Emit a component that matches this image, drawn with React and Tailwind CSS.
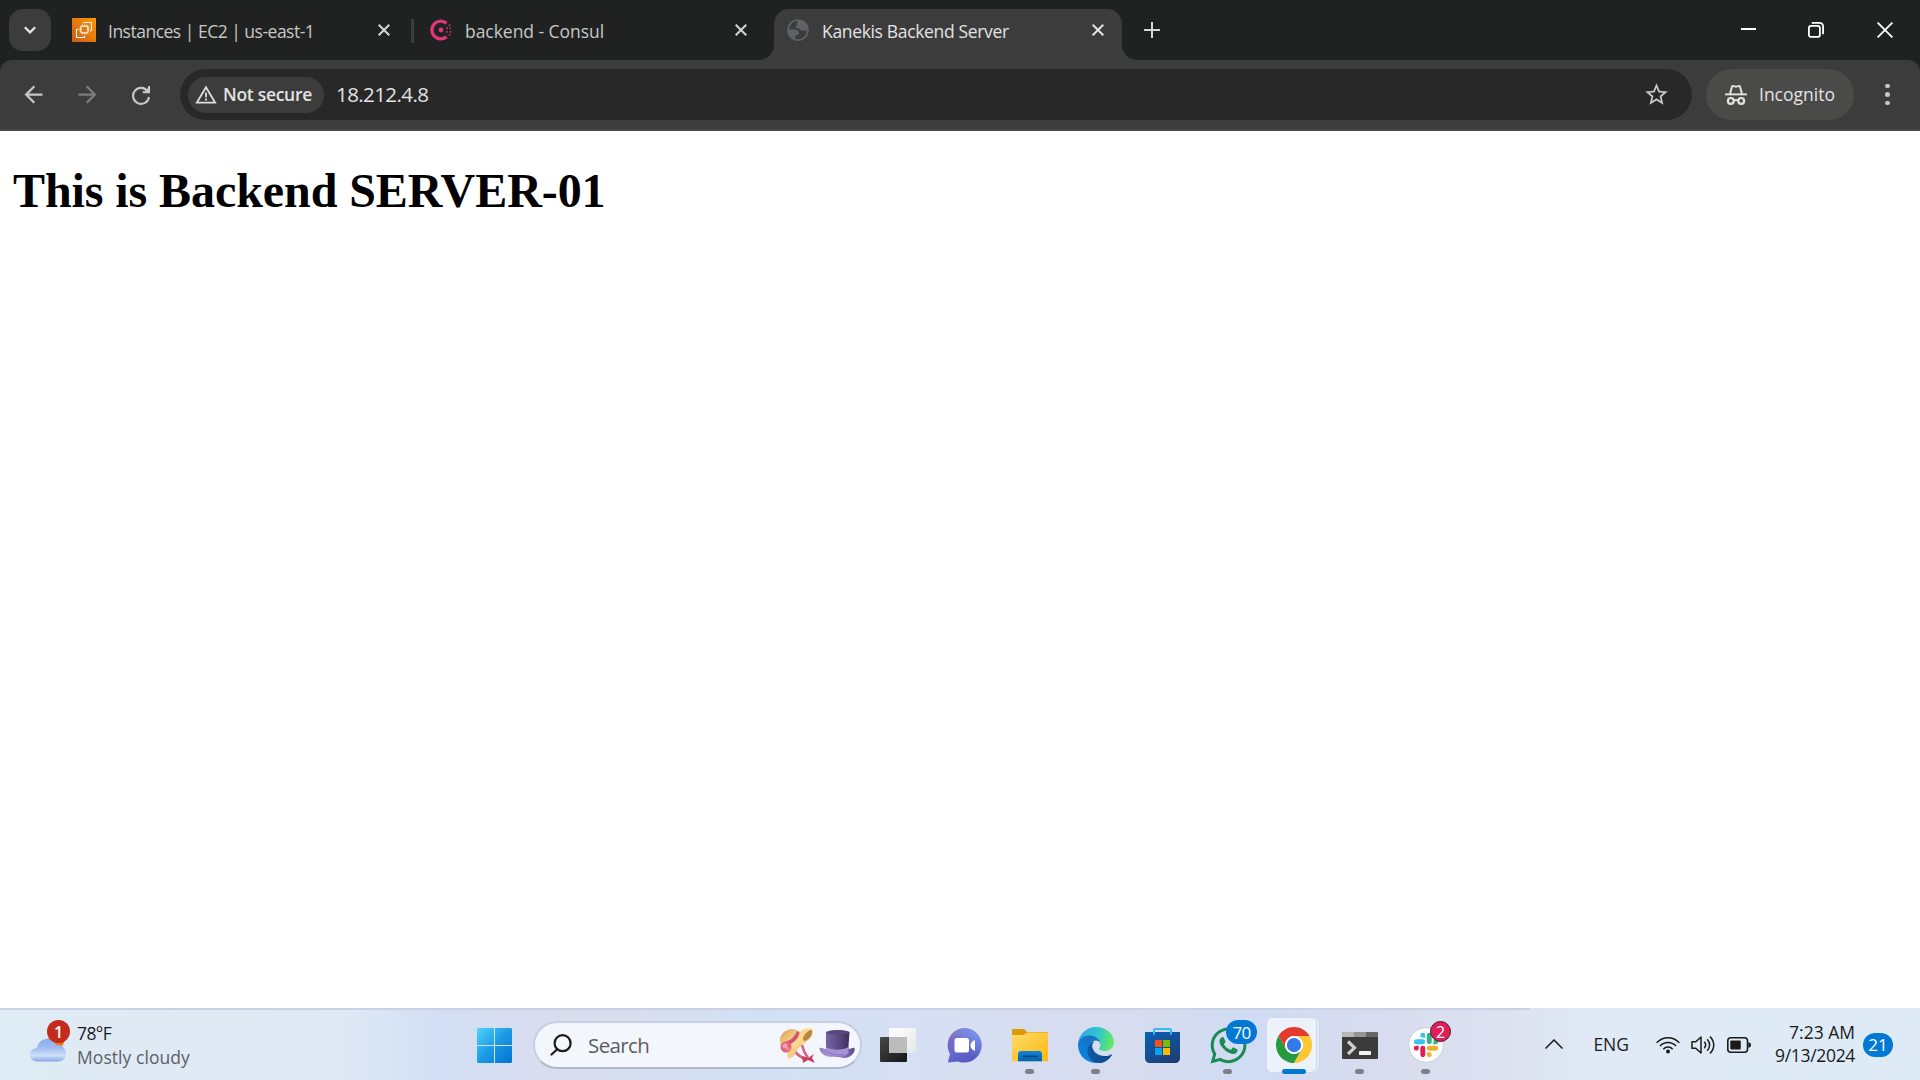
import { MdArrowBack, MdArrowForward, MdStarBorder } from "react-icons/md";
import { FaWhatsapp } from "react-icons/fa";

const UI = "font-['Open_Sans','Noto_Sans',sans-serif]";

/* ---------- Browser icons ---------- */

function Ec2Icon() {
  return (
    <svg viewBox="0 0 24 24" className="size-6 shrink-0">
      <defs>
        <linearGradient id="ec2" x1="0" y1="1" x2="1" y2="0">
          <stop offset="0" stopColor="#cb5a1b" />
          <stop offset="1" stopColor="#ff9900" />
        </linearGradient>
      </defs>
      <rect width="24" height="24" fill="url(#ec2)" />
      <g fill="none" stroke="#fff" strokeWidth="1">
        <rect x="9" y="8.2" width="6.8" height="6.6" />
        <path d="M10.5 8V6.7M12.4 8V6.7M14.3 8V6.7M10.5 15v1.3M12.4 15v1.3M14.3 15v1.3M8.8 9.8H7.5M8.8 11.5H7.5M8.8 13.2H7.5M16 9.8h1.3M16 11.5h1.3M16 13.2h1.3" strokeWidth=".9" />
        <path d="M11.3 5.2V4.5h8.2v8.3h-1.3M6.6 11.3H4.5v8.2h8.2v-1.9" />
      </g>
    </svg>
  );
}

function ConsulIcon() {
  return (
    <svg viewBox="0 0 22 22" className="size-[22px] shrink-0">
      <path d="M16.6 4.3A8.9 8.9 0 1 0 16.6 17.7" fill="none" stroke="#e03875" strokeWidth="3.4" />
      <g fill="#e03875">
        <circle cx="11" cy="11" r="2.4" />
        <circle cx="17.2" cy="9.2" r=".85" />
        <circle cx="17.2" cy="12.8" r=".85" />
        <circle cx="20.3" cy="9" r=".85" />
        <circle cx="20.5" cy="12.8" r=".85" />
        <circle cx="19.6" cy="6.2" r=".85" />
        <circle cx="19.6" cy="15.8" r=".85" />
      </g>
    </svg>
  );
}

function GlobeIcon() {
  return (
    <svg viewBox="0 0 22 22" className="size-[22px] shrink-0">
      <circle cx="11" cy="11" r="10" fill="none" stroke="#5f6368" strokeWidth="1.6" />
      <path
        fill="#5f6368"
        d="M12 1.6c-1.6.6-2.3 1.5-1.8 2.8.4 1.100-.2 2-1.300 2.600-.8.4-.8 1.500 0 1.900 1.300.6 3.200-.1 3.900 1.300.6 1.300 1.900 1.500 3.100 1.300 1.500-.3 2.700.6 4.500.1C21 6.400 17.500 2 12 1.600zM1.600 10.600c2.500-.6 5.300-.4 7.700.5 1.800.7 3 1.900 2.700 3.400-.2 1-1.200 1.300-2.300 1.300-1 0-1.400.8-1.300 1.900v2.500C4.200 19.200 1.400 15.500 1.600 10.600z"
      />
    </svg>
  );
}

function CloseGlyph({ className }) {
  return (
    <svg viewBox="0 0 12 12" className={`size-3 shrink-0 ${className}`} fill="none" stroke="currentColor" strokeWidth="2">
      <path d="M.7.7l10.600 10.600M11.300.7L.7 11.300" />
    </svg>
  );
}

function ReloadIcon() {
  return (
    <svg viewBox="0 0 20 20" className="ml-[30px] h-5 w-5 shrink-0 text-[#c7c7c7]" fill="none" stroke="currentColor" strokeWidth="2.100">
      <path d="M16.800 6.500A8 8 0 1 0 18 12" />
      <path d="M18 1v6.300h-6.300" />
      <path d="M17.500 2.500v4.300h-4.300z" fill="currentColor" stroke="none" />
    </svg>
  );
}

function WarningIcon() {
  return (
    <svg viewBox="0 0 22 19" className="h-[19px] w-[22px] shrink-0" fill="none" stroke="#dedede">
      <path d="M11 2.200L1.900 17.600h18.200z" strokeWidth="1.800" />
      <path d="M11 7.600v4.600M11 13.600v2" strokeWidth="1.800" />
    </svg>
  );
}

function IncognitoIcon() {
  return (
    <svg viewBox="0 0 22 20" className="h-5 w-[22px] shrink-0" fill="none" stroke="#e3e3e3">
      <path d="M0 9.400h22" strokeWidth="1.900" />
      <path d="M5 9L6.800 2.200C7 1.200 7.800.8 8.700 1.100L11 1.800l2.300-.7c.9-.3 1.700.1 1.900 1.100L17 9" strokeWidth="2" />
      <circle cx="5.800" cy="15.900" r="2.900" strokeWidth="2.200" />
      <circle cx="16.200" cy="15.900" r="2.900" strokeWidth="2.200" />
      <path d="M8.600 15.500q2.400-1 4.800 0" strokeWidth="1.900" />
    </svg>
  );
}

/* ---------- Taskbar icons ---------- */

function WeatherIcon() {
  return (
    <svg viewBox="0 0 36 24" className="h-6 w-9">
      <defs>
        <linearGradient id="cloud" x1="0" y1="0" x2="0" y2="1">
          <stop offset="0" stopColor="#8fb0ee" />
          <stop offset=".65" stopColor="#cfe0fa" />
          <stop offset="1" stopColor="#82a5e8" />
        </linearGradient>
        <linearGradient id="cloudBack" x1="0" y1="0" x2="0" y2="1">
          <stop offset="0" stopColor="#8aaaf0" />
          <stop offset="1" stopColor="#c4d7f8" />
        </linearGradient>
      </defs>
      <path d="M17 0h17c1 4-1 9-5 10z" fill="#f07a13" />
      <path d="M7 13C6 6 11 1 17 1c5 0 9 3 9.500 8v14H7z" fill="url(#cloudBack)" />
      <path d="M7.500 10c2 0 4 .6 5.500 2 2 .8 4 .8 7.500.3C22 9 25 7 28 7c4.600 0 8 3.800 8 8.500 0 4.700-3.500 8-8 8H7.300C3 23.500 0 20.600 0 16.800 0 12.800 3.300 10 7.500 10z" fill="url(#cloud)" />
    </svg>
  );
}

function StartIcon() {
  return (
    <svg viewBox="0 0 35 35" className="size-[35px] shrink-0">
      <defs>
        <linearGradient id="win" x1="0" y1="0" x2="35" y2="35" gradientUnits="userSpaceOnUse">
          <stop offset="0" stopColor="#50d4fc" />
          <stop offset=".5" stopColor="#1b9ae4" />
          <stop offset="1" stopColor="#0272d0" />
        </linearGradient>
      </defs>
      <g fill="url(#win)">
        <path d="M1 0h16v17H0V1zM18 0h16l1 1v16H18zM0 18h17v17H1l-1-1zM18 18h17v16l-1 1H18z" />
      </g>
    </svg>
  );
}

function SunHatIcon() {
  return (
    <svg viewBox="0 0 35 35" className="size-[35px]">
      <defs>
        <linearGradient id="straw" x1="0" y1="0" x2="1" y2="1">
          <stop offset="0" stopColor="#d99a4c" />
          <stop offset=".45" stopColor="#fbdc96" />
          <stop offset="1" stopColor="#e6a652" />
        </linearGradient>
      </defs>
      <path d="M14 22c3 5 8 8 13 9M22 17c1 5 3 9 6 13" fill="none" stroke="#d9607a" strokeWidth="2.600" />
      <path d="M0 12C0 6 6 1 12 1c3 0 6 1 8 3 4-3 8-5 12-3 2 4 0 9-6 13-5 3-8 6-10 10-2 4-4 6-8 7 0-5-1-8-4-9C2 20 0 17 0 12z" fill="url(#straw)" />
      <path d="M23 11c0-4 5-9 9-9 1 4-2 9-7 11-1 0-2-1-2-2z" fill="#a8742f" opacity=".8" />
      <path d="M4 14C10 13 15 9 17 3l2.500 1.500C18.500 11 13 16 7 17z" fill="#d9506d" />
      <circle cx="6" cy="19" r="5.500" fill="#e2637e" />
      <circle cx="5" cy="18" r="2.500" fill="#f6a0ad" />
      <circle cx="8" cy="21" r="2" fill="#ee8798" />
      <path d="M22 28l6 2 6-4-2 4 3 5-7-3-5 3z" fill="#c83f5d" />
    </svg>
  );
}

function TopHatIcon() {
  return (
    <svg viewBox="0 0 36 30" className="h-[30px] w-9">
      <defs>
        <linearGradient id="hat" x1="0" x2="1" y1="0" y2="0">
          <stop offset="0" stopColor="#7566a0" />
          <stop offset=".5" stopColor="#5c4c85" />
          <stop offset="1" stopColor="#3d2f5e" />
        </linearGradient>
        <linearGradient id="brim" x1="0" x2="1" y1="0" y2="0">
          <stop offset="0" stopColor="#8e7ac0" />
          <stop offset=".35" stopColor="#b5a2e3" />
          <stop offset="1" stopColor="#5c498c" />
        </linearGradient>
      </defs>
      <path d="M.5 18c2-.8 4 1 6 1h23c2 0 4-2 6-1 1.200 4-3.500 10-10 10-4 0-6-2-10-1.500C9 28 1 25 .5 18z" fill="url(#brim)" />
      <path d="M7 2c5-3 18-2.600 23.500 0L29 23c-5 4-16 5-22 0z" fill="url(#hat)" />
      <path d="M7 17c6 3.500 16 3.500 22.500 0v6c-4 4.500-17 4.500-23 0z" fill="#a693d8" />
      <path d="M7 21c7 4 11 4.500 18 3.500" stroke="#8370b8" fill="none" />
      <ellipse cx="18.700" cy="2.500" rx="11" ry="1.800" fill="#57477f" />
    </svg>
  );
}

function TaskViewIcon() {
  return (
    <svg viewBox="0 0 36 35" className="h-[35px] w-9">
      <defs>
        <linearGradient id="tvDark" x1="0" y1="0" x2="1" y2="1">
          <stop offset="0" stopColor="#484848" />
          <stop offset="1" stopColor="#161616" />
        </linearGradient>
        <linearGradient id="tvLight" x1="0" y1="0" x2="1" y2="1">
          <stop offset="0" stopColor="#fff" />
          <stop offset="1" stopColor="#e6e7ea" />
        </linearGradient>
      </defs>
      <rect y="9" width="27" height="25" rx="1" fill="url(#tvDark)" />
      <rect x="9" y="0" width="27" height="25" rx="1" fill="url(#tvLight)" />
      <rect x="9" y="9" width="18" height="16" fill="#bcbcbc" />
    </svg>
  );
}

function ChatIcon() {
  return (
    <svg viewBox="0 0 35 35" className="size-[35px]">
      <defs>
        <linearGradient id="chat" x1=".1" y1="0" x2=".8" y2="1">
          <stop offset="0" stopColor="#8a67b0" />
          <stop offset=".5" stopColor="#6867cc" />
          <stop offset="1" stopColor="#5055c0" />
        </linearGradient>
        <linearGradient id="chatGlow" x1="1" y1="0" x2=".5" y2=".7">
          <stop offset="0" stopColor="#7fb0ff" stopOpacity=".8" />
          <stop offset="1" stopColor="#7fa8ff" stopOpacity="0" />
        </linearGradient>
      </defs>
      <path d="M17.500 0A17.300 17.300 0 1 1 11 33.400L.8 34.500 3 26A17.300 17.300 0 0 1 17.500 0z" fill="url(#chat)" />
      <path d="M17.500 0A17.300 17.300 0 1 1 11 33.400L.8 34.500 3 26A17.300 17.300 0 0 1 17.500 0z" fill="url(#chatGlow)" />
      <rect x="7.500" y="10" width="14.500" height="14.500" rx="2.500" fill="#fff" />
      <path d="M28 12v11c-3-1-4.500-3-4.500-5.500S25 13 28 12z" fill="#fff" />
    </svg>
  );
}

function ExplorerIcon() {
  return (
    <svg viewBox="0 0 36 34" className="h-[34px] w-9">
      <defs>
        <linearGradient id="folder" x1="0" y1="0" x2="1" y2="1">
          <stop offset="0" stopColor="#ffdb6b" />
          <stop offset="1" stopColor="#fbb80f" />
        </linearGradient>
        <linearGradient id="folderTab" x1="0" y1="0" x2="0" y2="1">
          <stop offset="0" stopColor="#1683d8" />
          <stop offset="1" stopColor="#0063b4" />
        </linearGradient>
      </defs>
      <path d="M0 2c0-.8.500-1 1-1h10.500c1.500 0 2.500 3 4 3H35l1 1v10H0z" fill="#dc9a06" />
      <path d="M0 7h11c2 0 3-2.500 5-2.500h20V33.300H0z" fill="url(#folder)" />
      <path d="M6 33.300V26c0-2 1.500-3 3-3h18c2 0 3 1.300 3 3v7.300z" fill="url(#folderTab)" />
      <rect x="10.500" y="27.500" width="15" height="1.800" rx=".9" fill="#0a4684" />
    </svg>
  );
}

function EdgeIcon() {
  return (
    <svg viewBox="0 0 256 256" className="size-9">
      <defs>
        <linearGradient id="edgeA" x1="63" y1="177" x2="241" y2="177" gradientUnits="userSpaceOnUse">
          <stop offset="0" stopColor="#0c59a4" />
          <stop offset="1" stopColor="#114a8b" />
        </linearGradient>
        <linearGradient id="edgeB" x1="157" y1="99" x2="46" y2="221" gradientUnits="userSpaceOnUse">
          <stop offset="0" stopColor="#1b6fb8" />
          <stop offset=".5" stopColor="#1277ce" />
          <stop offset="1" stopColor="#0a84dc" />
        </linearGradient>
        <linearGradient id="edgeC" x1="10" y1="60" x2="250" y2="110" gradientUnits="userSpaceOnUse">
          <stop offset="0" stopColor="#2fa8e0" />
          <stop offset=".5" stopColor="#30c4d2" />
          <stop offset="1" stopColor="#66eb5e" />
        </linearGradient>
      </defs>
      <path d="M235.700 195.500a93.700 93.700 0 0 1-10.600 4.700 101.900 101.900 0 0 1-35.900 6.400c-47.300 0-88.500-32.500-88.500-74.300a31.500 31.500 0 0 1 16.400-27.300c-42.800 1.800-53.800 46.400-53.800 72.500 0 74 68.100 81.400 82.800 81.400 7.900 0 19.800-2.300 27-4.600l1.300-.4a128.300 128.300 0 0 0 66.600-52.800 4 4 0 0 0-5.300-5.600z" fill="url(#edgeA)" />
      <path d="M105.700 241.400a79.200 79.200 0 0 1-22.700-21.300 80.700 80.700 0 0 1 29.500-120c3.200-1.500 8.500-4.100 15.600-4a32.400 32.400 0 0 1 25.700 13 31.900 31.900 0 0 1 6.300 18.700c0-.2 24.500-79.600-80-79.600-43.900 0-80 41.600-80 78.200a130.200 130.200 0 0 0 12.100 56 128 128 0 0 0 156.400 67 75.500 75.500 0 0 1-62.800-8z" fill="url(#edgeB)" />
      <path d="M152.300 148.900c-.9 1-3.400 2.500-3.400 5.600 0 2.600 1.700 5.200 4.800 7.300 14.300 10 41.400 8.600 41.500 8.600a59.600 59.600 0 0 0 30.300-8.300 61.400 61.400 0 0 0 30.400-52.900c.3-22.400-8-37.300-11.300-43.900C223.500 23.900 177.700 0 128 0a128 128 0 0 0-128 126.200c.5-36.500 36.800-66 80-66 3.500 0 23.500.3 42 10.100 16.300 8.600 24.900 18.900 30.800 29.200 6.200 10.700 7.300 24.100 7.300 29.500s-2.700 13.300-7.800 19.900z" fill="url(#edgeC)" />
    </svg>
  );
}

function StoreIcon() {
  return (
    <svg viewBox="0 0 35 35" className="size-[35px]">
      <defs>
        <linearGradient id="store" x1="0" y1="0" x2=".7" y2="1">
          <stop offset="0" stopColor="#0a63b8" />
          <stop offset="1" stopColor="#1c3f77" />
        </linearGradient>
      </defs>
      <path d="M0 4h35v26c0 3-2 5-5 5H5c-3 0-5-2-5-5z" fill="url(#store)" />
      <path d="M9 6.500V2.200C9 1.400 9.400 1 10.200 1h14.600c.8 0 1.200.4 1.200 1.200v4.300" fill="none" stroke="#33bdf2" strokeWidth="2" />
      <path d="M10 12h7v7h-7z" fill="#f25022" />
      <path d="M18 12h7v7h-7z" fill="#7fba00" />
      <path d="M10 20h7v7h-7z" fill="#00a4ef" />
      <path d="M18 20h7v7h-7z" fill="#ffb900" />
    </svg>
  );
}

function ChromeIcon() {
  return (
    <svg viewBox="0 0 48 48" className="size-9">
      <path d="M24 12h20.780A24 24 0 0 0 3.220 12L13.610 30A12 12 0 0 1 24 12z" fill="#e33b2e" />
      <path d="M3.220 12A24 24 0 0 0 24 48L34.390 30A12 12 0 0 1 13.610 30z" fill="#249a41" />
      <path d="M24 48A24 24 0 0 0 44.780 12H24A12 12 0 0 1 34.390 30z" fill="#fcc934" />
      <circle cx="24" cy="24" r="12" fill="#fff" />
      <circle cx="24" cy="24" r="9.500" fill="#3279ea" />
    </svg>
  );
}

function TerminalIcon() {
  return (
    <svg viewBox="0 0 36 27" className="h-[27px] w-9">
      <rect width="36" height="27" rx="1.500" fill="#3b3b3b" />
      <path d="M1.500 0H12v5H0V1.500A1.500 1.500 0 0 1 1.500 0z" fill="#b9b9b9" />
      <path d="M12 0h12v5H12z" fill="#949494" />
      <path d="M24 0h10.500A1.500 1.500 0 0 1 36 1.500V5H24z" fill="#666" />
      <path d="M6 9.500l6.500 6.300L6 22" fill="none" stroke="#cfcfcf" strokeWidth="3.200" />
      <rect x="17" y="19" width="12" height="4" rx=".6" fill="#f1f1f1" />
    </svg>
  );
}

const SLACK_ARM =
  "M19.712.133a5.381 5.381 0 0 0-5.376 5.387 5.381 5.381 0 0 0 5.376 5.386h5.376V5.520A5.381 5.381 0 0 0 19.712.133m0 14.365H5.376A5.381 5.381 0 0 0 0 19.884a5.381 5.381 0 0 0 5.376 5.387h14.336a5.381 5.381 0 0 0 5.376-5.387 5.381 5.381 0 0 0-5.376-5.386";

function SlackIcon() {
  return (
    <svg viewBox="0 0 36 36" className="size-9">
      <circle cx="18" cy="18" r="17.300" fill="#fff" stroke="#c3c8d2" strokeWidth=".8" />
      <g transform="translate(5.800 5.700) scale(.455)">
        <path d={SLACK_ARM} fill="#36c5f0" />
        <path d={SLACK_ARM} fill="#2eb67d" transform="rotate(90 26.900 27)" />
        <path d={SLACK_ARM} fill="#ecb22e" transform="rotate(180 26.900 27)" />
        <path d={SLACK_ARM} fill="#e01e5a" transform="rotate(270 26.900 27)" />
      </g>
    </svg>
  );
}

function WifiIcon() {
  return (
    <svg viewBox="0 0 24 18" className="h-[18px] w-6" fill="none" stroke="#1b1b1b" strokeWidth="1.600">
      <path d="M.7 6.700c6.300-6.700 16.300-6.700 22.600 0" />
      <path d="M4 10c4.500-4.700 11.500-4.700 16 0" />
      <path d="M7.300 13.200c2.700-2.900 6.700-2.900 9.400 0" />
      <circle cx="12" cy="15.500" r="2" fill="#1b1b1b" stroke="none" />
    </svg>
  );
}

function SpeakerIcon() {
  return (
    <svg viewBox="0 0 25 20" className="h-5 w-[25px]" fill="none" stroke="#1b1b1b" strokeWidth="1.500" strokeLinejoin="round">
      <path d="M1 6.800h3.800L10 2v16l-5.200-4.800H1z" />
      <path d="M13.300 6.800c1.700 2 1.700 4.400 0 6.400M16.200 4.300c3.200 3.300 3.200 8.100 0 11.400M19 1.600c5 4.900 5 11.900 0 16.800" />
    </svg>
  );
}

function BatteryIcon() {
  return (
    <svg viewBox="0 0 24 16" className="h-4 w-6">
      <rect x=".8" y=".8" width="19.700" height="14.400" rx="3" fill="none" stroke="#1b1b1b" strokeWidth="1.600" />
      <rect x="3.300" y="3.500" width="10.500" height="9" rx="1" fill="#1b1b1b" />
      <path d="M21.300 5.300c1.600 0 2.700 1 2.700 2.700s-1.100 2.700-2.700 2.700z" fill="#1b1b1b" />
    </svg>
  );
}

/* ---------- Browser chrome ---------- */

function TabStrip() {
  return (
    <div className="flex h-[60px] items-start bg-[#202221] text-[17.5px] leading-6 text-[#c7c7c7]">
      <button className="ml-[9px] mt-[9px] flex size-[42px] shrink-0 items-center justify-center rounded-[14px] bg-[#3c3c3c]">
        <svg viewBox="0 0 12 8" className="h-2 w-3" fill="none" stroke="#e3e3e3" strokeWidth="2.300">
          <path d="M.8 1.200L6 6.300l5.200-5.100" />
        </svg>
      </button>

      <div className="ml-[21px] flex h-[60px] w-[318px] items-center">
        <Ec2Icon />
        <span className="ml-3 mt-px whitespace-nowrap tracking-[-0.5px]">Instances | EC2 | us-east-1</span>
        <CloseGlyph className="ml-auto text-[#d5d5d5]" />
      </div>
      <div className="ml-[21px] mt-[19px] h-6 w-[3px] bg-[#3c3c3c]" />
      <div className="ml-4 flex h-[60px] w-[317px] items-center">
        <ConsulIcon />
        <span className="ml-[13px] mt-px whitespace-nowrap tracking-[-0.04px]">backend - Consul</span>
        <CloseGlyph className="ml-auto text-[#d5d5d5]" />
      </div>

      <div className="relative ml-[27px] mt-[9px] flex h-[51px] w-[348px] items-start rounded-t-[15px] bg-[#3c3c3c] pl-[13px] pr-[18px] text-[#e3e3e3]">
        <div className="absolute -left-[15px] bottom-0 size-[15px] bg-[#3c3c3c]">
          <div className="size-full rounded-br-[15px] bg-[#202221]" />
        </div>
        <div className="absolute -right-[15px] bottom-0 size-[15px] bg-[#3c3c3c]">
          <div className="size-full rounded-bl-[15px] bg-[#202221]" />
        </div>
        <div className="flex h-[42px] w-full items-center">
          <GlobeIcon />
          <span className="ml-[13px] mt-px whitespace-nowrap tracking-[-0.34px]">Kanekis Backend Server</span>
          <CloseGlyph className="ml-auto" />
        </div>
      </div>

      <svg viewBox="0 0 16 16" className="ml-[22px] mt-[22px] size-4" stroke="#d5d5d5" strokeWidth="2">
        <path d="M8 0v16M0 8h16" />
      </svg>

      <div className="ml-auto mr-[27px] flex h-[60px] items-center text-white">
        <div className="mb-0.5 h-0.5 w-[15px] bg-white" />
        <svg viewBox="0 0 16 16" className="ml-[52px] size-4" fill="none" stroke="currentColor" strokeWidth="1.800">
          <rect x=".9" y="3.900" width="11" height="11" rx="2.200" />
          <path d="M3.800 1.300C4.200 1 4.800.9 5.500.9h5.700c2.400 0 3.900 1.500 3.900 3.900v5.700c0 .7-.2 1.300-.6 1.700" />
        </svg>
        <svg viewBox="0 0 16 16" className="ml-[53px] size-4" stroke="currentColor" strokeWidth="1.800">
          <path d="M.6.6l14.800 14.800M15.400.6L.6 15.400" />
        </svg>
      </div>
    </div>
  );
}

function Toolbar() {
  return (
    <div className="bg-[#202221]">
      <div className="flex h-[71px] items-center rounded-t-[12px] border-b-2 border-[#474747] bg-[#3c3c3c]">
        <MdArrowBack className="ml-5 size-[27px] shrink-0 text-[#c7c7c7]" />
        <MdArrowForward className="ml-[27px] size-[27px] shrink-0 text-[#7c7c7c]" />
        <ReloadIcon />
        <div className="ml-[29px] flex h-[51px] w-[1512px] items-center rounded-full bg-[#282828] pl-2 pr-[22px]">
          <div className="flex h-9 w-[136px] items-center rounded-full bg-[#3c3c3c] pl-[7px]">
            <WarningIcon />
            <span className="mb-0.5 ml-1.5 whitespace-nowrap text-[17.5px] font-semibold leading-6 tracking-[-0.29px] text-[#e3e3e3]">Not secure</span>
          </div>
          <span className="mb-0.5 ml-3 text-[20.5px] leading-7 tracking-[-0.58px] text-[#e3e3e3]">18.212.4.8</span>
          <MdStarBorder className="ml-auto size-[27px] text-[#c7c7c7]" />
        </div>
        <div className="ml-3.5 flex h-[51px] w-[148px] items-center rounded-full bg-[#4a4a48] pl-[19px]">
          <IncognitoIcon />
          <span className="mb-0.5 ml-3 text-[17.5px] leading-6 text-[#e3e3e3]">Incognito</span>
        </div>
        <div className="ml-[31px] flex flex-col gap-1">
          <div className="size-[4.5px] rounded-full bg-[#c7c7c7]" />
          <div className="size-[4.5px] rounded-full bg-[#c7c7c7]" />
          <div className="size-[4.5px] rounded-full bg-[#c7c7c7]" />
        </div>
      </div>
    </div>
  );
}

/* ---------- Taskbar ---------- */

function TaskItem({ children, running }) {
  return (
    <div className="relative flex h-full w-[66px] shrink-0 items-center justify-center">
      {children}
      {running && <div className="absolute bottom-1.5 left-7 h-[5px] w-[9px] rounded-full bg-[#7c8089]" />}
    </div>
  );
}

function Taskbar() {
  return (
    <div className="relative flex h-[72px] shrink-0 items-center bg-[linear-gradient(90deg,#dfebf5_0px,#dfe9f5_340px,#d2def4_440px,#d9ddee_550px,#d3e0f3_760px,#d6dff4_900px,#d7dcee_1130px,#cfdcf4_1250px,#d8dcee_1380px,#dde3f1_1520px,#dfeaf6_1600px,#deeaf6_1920px)] pt-0.5 text-[17.5px] text-[#1b1b1b]">
      <div className="absolute left-0 top-0 h-0.5 w-[1530px] bg-[#c8d2e4]" />

      <div className="relative ml-[30px] flex h-full w-[447px] items-center">
        <div className="relative mt-2.5">
          <WeatherIcon />
          <div className="absolute -top-[18px] left-[17px] flex size-[23px] items-center justify-center rounded-full bg-[#c42b1c] text-[16px] font-semibold leading-none text-white">1</div>
        </div>
        <div className="ml-[11px] leading-6">
          <div className="tracking-[-0.6px]">78°F</div>
          <div className="tracking-[0.06px] text-[#5c6066]">Mostly cloudy</div>
        </div>
      </div>

      <StartIcon />

      <div className="ml-[21px] flex h-12 w-[329px] shrink-0 items-center rounded-full border-2 border-[#c6d0e4] border-b-[#b0bacd] bg-[#f3f6fc] pl-[15px]">
        <svg viewBox="0 0 22 22" className="size-[22px]" fill="none" stroke="#1b1b1b" strokeWidth="2.200" strokeLinecap="round">
          <circle cx="12.600" cy="9.200" r="8" />
          <path d="M7 15.500l-5.500 5" />
        </svg>
        <span className="ml-4 text-[20.5px] leading-7 tracking-[-0.6px] text-[#5d5d5f]">Search</span>
        <div className="ml-auto mr-[5px] flex items-start gap-1">
          <SunHatIcon />
          <div className="pt-0.5">
            <TopHatIcon />
          </div>
        </div>
      </div>

      <div className="ml-[3px] flex h-full items-center">
        <TaskItem>
          <TaskViewIcon />
        </TaskItem>
        <TaskItem>
          <ChatIcon />
        </TaskItem>
        <TaskItem running>
          <ExplorerIcon />
        </TaskItem>
        <TaskItem running>
          <EdgeIcon />
        </TaskItem>
        <TaskItem>
          <StoreIcon />
        </TaskItem>
        <TaskItem running>
          <FaWhatsapp className="size-[41px] text-[#1b8a55]" />
          <div className="absolute left-[31px] top-2.5 flex h-6 w-[31px] items-center justify-center rounded-full bg-[#0078d4] text-[17px] leading-none tracking-[-0.8px] text-white">70</div>
        </TaskItem>
        <TaskItem>
          <div className="absolute left-[11px] top-[7px] h-14 w-12 rounded-md border border-[#cdd6e8] bg-[#e3e9f5]" />
          <div className="absolute left-[5px] top-[7px] h-14 w-[51px] rounded-md border border-[#cfd7e8] bg-[#edf1fa]" />
          <div className="relative">
            <ChromeIcon />
          </div>
          <div className="absolute bottom-1.5 left-[21px] h-[5px] w-6 rounded-full bg-[#0078d4]" />
        </TaskItem>
        <TaskItem running>
          <TerminalIcon />
        </TaskItem>
        <TaskItem running>
          <SlackIcon />
          <div className="absolute left-[37px] top-[11px] flex size-[21px] items-center justify-center rounded-full border-[1.5px] border-[#4b1830] bg-[#e01e5a] text-[16px] leading-none text-white">2</div>
        </TaskItem>
      </div>

      <div className="ml-auto flex items-center">
        <svg viewBox="0 0 18 10" className="mb-0.5 h-2.5 w-[18px]" fill="none" stroke="#1b1b1b" strokeWidth="1.500">
          <path d="M.5 9.500L9 1l8.500 8.500" />
        </svg>
        <span className="mb-0.5 ml-[30px]">ENG</span>
        <div className="mb-px ml-[27px] flex items-center gap-[11px]">
          <WifiIcon />
          <SpeakerIcon />
          <BatteryIcon />
        </div>
        <div className="mb-0.5 w-[104px] text-right leading-[23px]">
          <div>7:23 AM</div>
          <div className="tracking-[-0.33px]">9/13/2024</div>
        </div>
        <div className="mb-px ml-2 mr-[27px] flex h-6 w-[30px] items-center justify-center rounded-full bg-[#0078d4] pb-px text-[17px] leading-none text-white">21</div>
      </div>
    </div>
  );
}

export default function App() {
  return (
    <div className={`flex h-[1080px] w-[1920px] flex-col overflow-hidden bg-white ${UI}`}>
      <TabStrip />
      <Toolbar />
      <main className="flex-1 bg-white px-[13px] pt-8">
        <h1 className="font-['Liberation_Serif',serif] text-[48px] font-bold leading-[55px] tracking-[-0.08px] text-black">This is Backend SERVER-01</h1>
      </main>
      <Taskbar />
    </div>
  );
}
